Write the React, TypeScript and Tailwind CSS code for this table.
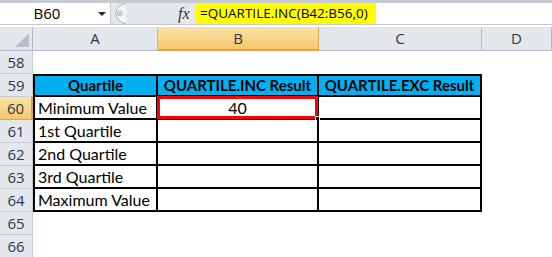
import React from 'react';

interface RowData {
  num: number;
  a?: string;
  b?: string;
  c?: string;
  header?: boolean;
  inTable?: boolean;
}

const rows: RowData[] = [
  { num: 58 },
  { num: 59, a: 'Quartile', b: 'QUARTILE.INC Result', c: 'QUARTILE.EXC Result', header: true, inTable: true },
  { num: 60, a: 'Minimum Value', b: '40', inTable: true },
  { num: 61, a: '1st Quartile', inTable: true },
  { num: 62, a: '2nd Quartile', inTable: true },
  { num: 63, a: '3rd Quartile', inTable: true },
  { num: 64, a: 'Maximum Value', inTable: true },
  { num: 65 },
  { num: 66 },
];

const cellFont = { fontFamily: 'Lato, "Open Sans", sans-serif' };

const FormulaBar: React.FC = () => (
  <div className="flex h-[25px] border-t-[3px] border-b border-[#c6cbd2] bg-white">
    {/* Name box */}
    <div className="relative flex w-[111px] items-center border-r border-[#c6cbd2]">
      <span className="w-[94px] text-center text-[15px] text-black" style={{ fontFamily: '"Open Sans", sans-serif' }}>
        B60
      </span>
      <svg width="8" height="5" viewBox="0 0 8 5" className="absolute left-[98px] top-[9px]">
        <path d="M0 0 H8 L4 4 Z" fill="#222" />
      </svg>
    </div>
    {/* Grip + fx */}
    <div className="relative flex w-[85px] items-center bg-[#e4e7eb]">
      <svg width="16" height="21" viewBox="0 0 16 21" className="absolute left-0 top-0">
        <path d="M15 0.5 A10 10 0 0 0 15 20.5" fill="#f4f5f7" stroke="#a9b0b9" />
        <circle cx="9" cy="10.5" r="3" fill="#c9cdd3" />
      </svg>
      <span
        className="absolute left-[67px] text-[16px] italic text-[#333]"
        style={{ fontFamily: '"Liberation Serif", serif' }}
      >
        fx
      </span>
    </div>
    {/* Formula input */}
    <div className="flex flex-1 items-stretch bg-white">
      <div
        className="flex w-[180px] items-center bg-[#ffff00] pl-[4px] text-[13.5px] text-black"
        style={{ fontFamily: '"Open Sans", sans-serif' }}
      >
        =QUARTILE.INC(B42:B56,0)
      </div>
    </div>
  </div>
);

const ColumnHeaders: React.FC = () => {
  const cols = [
    { label: 'A', w: 'w-[125px]' },
    { label: 'B', w: 'w-[161px]', active: true },
    { label: 'C', w: 'w-[163px]' },
    { label: 'D', w: 'flex-1' },
  ];
  return (
    <div className="flex h-[24px]" style={{ fontFamily: '"Open Sans", sans-serif' }}>
      <div className="relative w-[33px] border-r border-b border-[#b6bdc6] bg-[#e4e7eb]">
        <svg width="14" height="14" viewBox="0 0 14 14" className="absolute right-[3px] bottom-[3px]">
          <path d="M14 0 V14 H0 Z" fill="#b9bfc7" />
        </svg>
      </div>
      {cols.map((c) =>
        c.active ? (
          <div
            key={c.label}
            className={`${c.w} flex items-center justify-center border-r border-b-2 border-[#e3a546] bg-gradient-to-b from-[#fbe2a6] to-[#f4c86d] text-[15px] text-[#283a52]`}
          >
            {c.label}
          </div>
        ) : (
          <div
            key={c.label}
            className={`${c.w} flex items-center justify-center border-r border-b border-[#b6bdc6] bg-[#e4e7eb] text-[15px] text-[#283a52]`}
          >
            {c.label}
          </div>
        )
      )}
    </div>
  );
};

const SheetRow: React.FC<{ row: RowData }> = ({ row }) => {
  const active = row.num === 60;
  const t = row.inTable;
  const top = row.header ? 'border-t-2' : '';
  const base = t ? `border-b-2 border-r-2 border-black ${top}` : '';
  const fill = row.header ? 'bg-[#00b0f0] font-bold text-[15px]' : 'bg-white text-[16px]';

  return (
    <div className="flex h-[23px]">
      <div
        className={
          active
            ? 'flex w-[33px] items-center justify-center border-r-2 border-b border-[#e3a546] bg-gradient-to-b from-[#fbe2a6] to-[#f4c86d] text-[15px] text-[#283a52]'
            : 'flex w-[33px] items-center justify-center border-r border-b border-[#c6ccd4] bg-[#e4e7eb] text-[15px] text-[#283a52]'
        }
        style={{ fontFamily: '"Open Sans", sans-serif' }}
      >
        {row.num}
      </div>
      <div
        className={`flex w-[125px] items-center ${t ? `border-l-2 ${base} ${fill}` : ''} ${
          row.header ? 'justify-center' : 'pl-[3px]'
        } text-black`}
        style={cellFont}
      >
        {row.a}
      </div>
      <div
        className={`relative flex w-[161px] items-center justify-center ${t ? `${base} ${fill}` : ''} text-black`}
        style={cellFont}
      >
        {row.b}
        {active && (
          <>
            <div className="pointer-events-none absolute -top-[1px] -left-[1px] -right-[1px] -bottom-[1px] border-[3px] border-[#ff0000]" />
            <div className="absolute -right-[3px] -bottom-[3px] h-[5px] w-[5px] border border-white bg-black" />
          </>
        )}
      </div>
      <div
        className={`flex w-[163px] items-center justify-center ${t ? `${base} ${fill}` : ''} text-black`}
        style={cellFont}
      >
        {row.c}
      </div>
      <div className="flex-1 bg-white" />
    </div>
  );
};

export default function App() {
  return (
    <div className="h-[257px] w-[552px] overflow-hidden bg-white">
      <FormulaBar />
      <div className="h-[2px] bg-white" />
      <ColumnHeaders />
      {rows.map((r) => (
        <SheetRow key={r.num} row={r} />
      ))}
    </div>
  );
}
